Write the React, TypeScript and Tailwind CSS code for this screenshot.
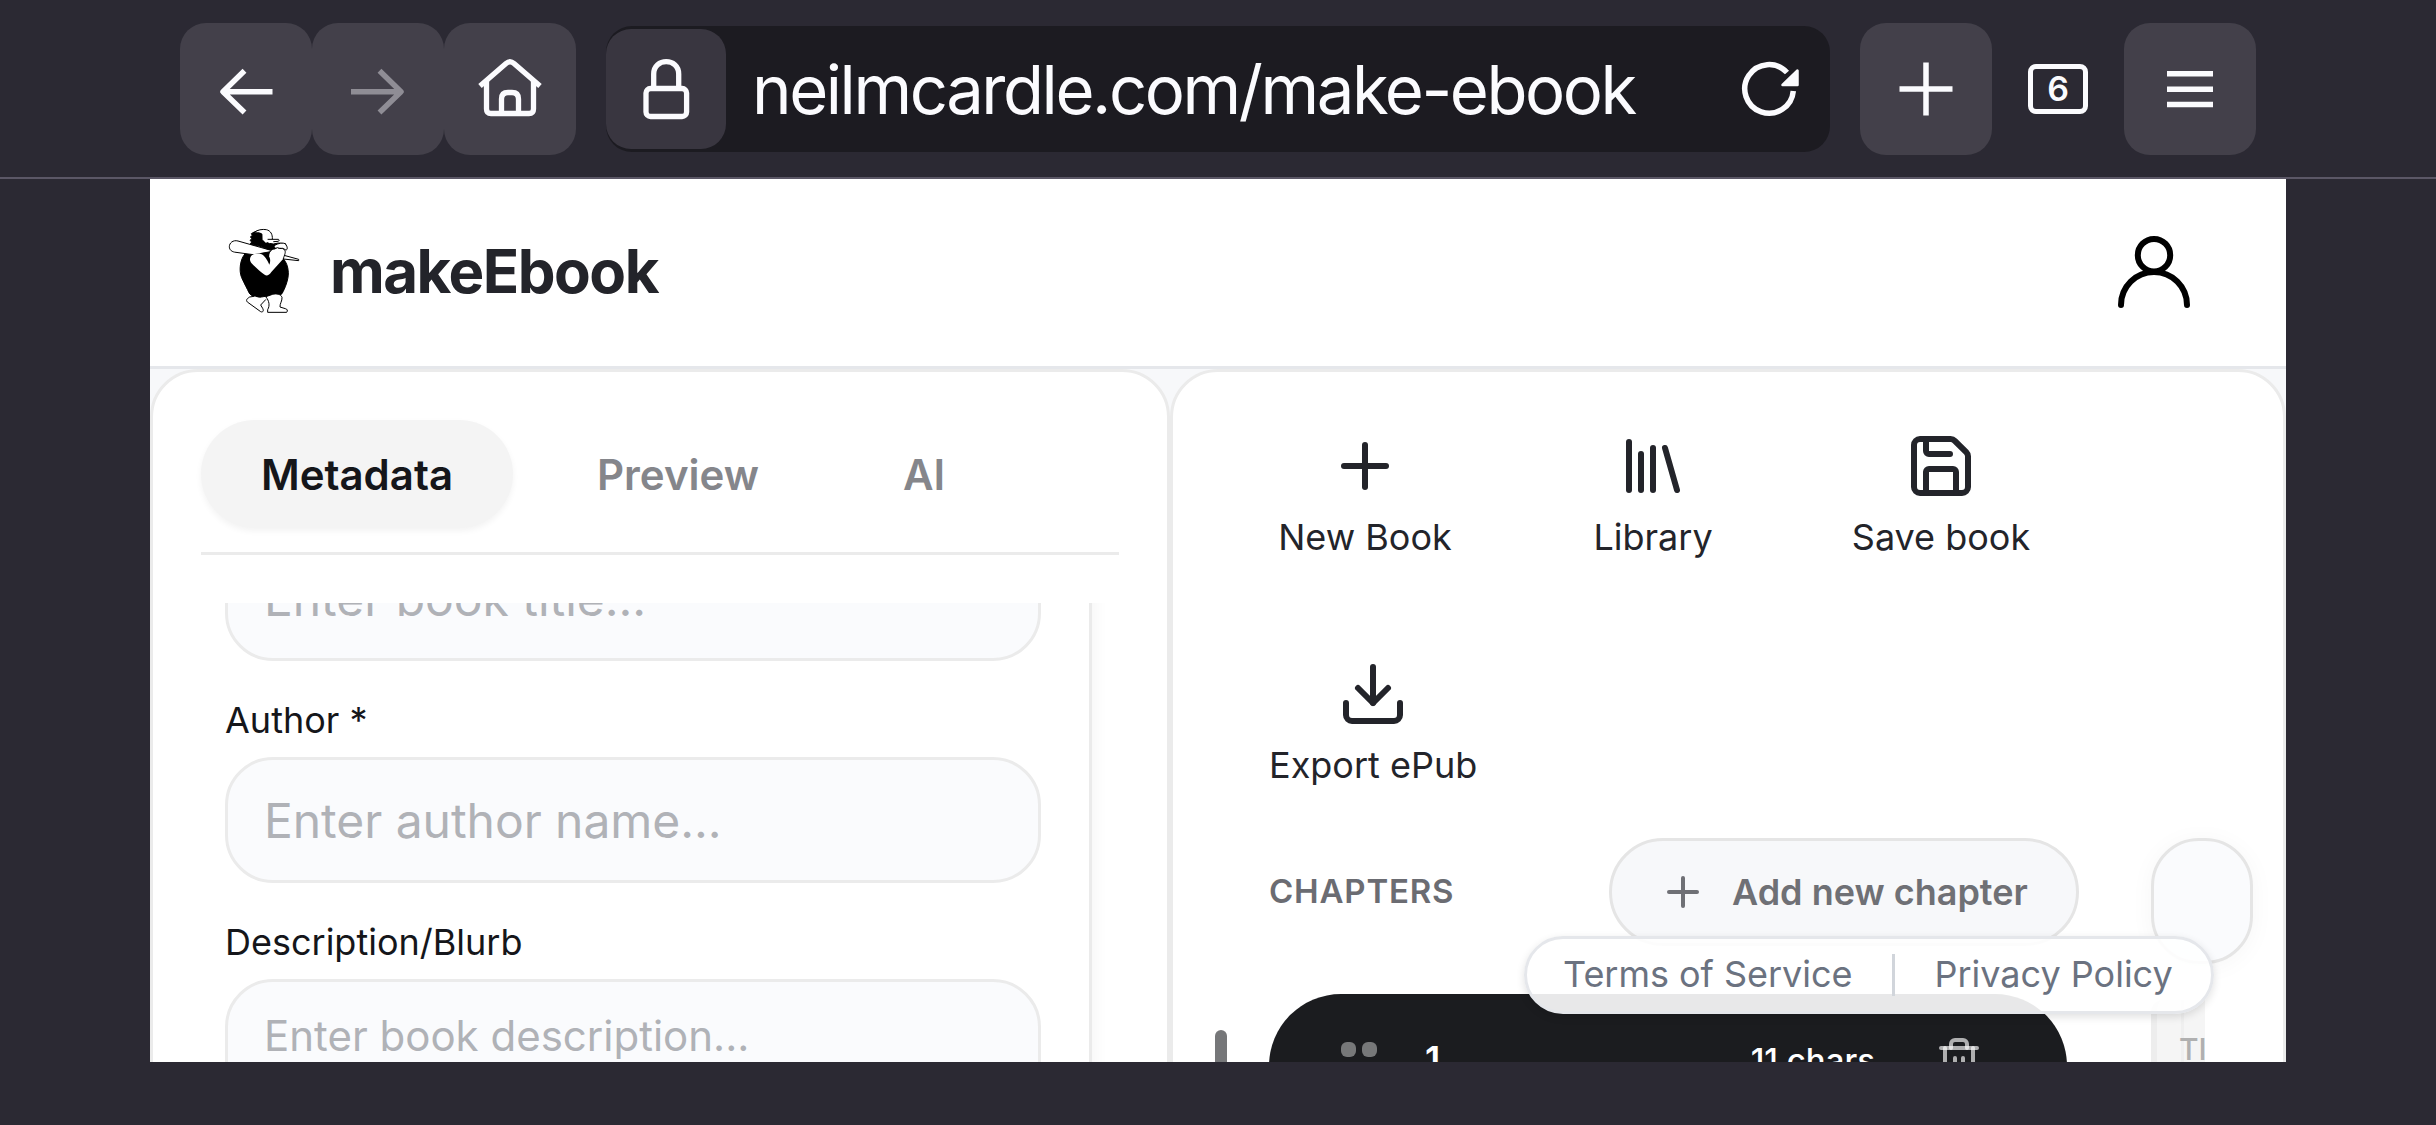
import React from "react";
import { Plus, Library, Save, Download, Trash2 } from "lucide-react";

function Mascot() {
  return (
    <svg viewBox="54 57 216 258" className="mb-[3px] h-[86px] w-[72px] shrink-0" fill="none" stroke="#000" strokeWidth="3" strokeLinejoin="round" strokeLinecap="round">
      <path d="M106 133C90 150 86 185 95 206C104 226 112 240 117 251C124 263 140 267 154 264L196 257C206 256 213 258 216 254C224 240 236 212 235 190C234 172 229 160 220 149L178 130Z" fill="#000" />
      <path d="M132 262L119 264C109 270 108 274 112 279L152 308C159 311 162 305 158 298L152 288L167 272" fill="#fff" />
      <path d="M168 264C178 276 180 290 173 302V310H230C234 305 232 300 226 299L210 294C209 284 217 276 216 265C212 255 200 253 188 256Z" fill="#fff" />
      <path d="M222 139L266 151V155L220 150Z" fill="#fff" />
      <path d="M190 126L84 96C69 92 58 102 58 113C58 123 66 129 78 130L130 137Z" fill="#fff" />
      <path d="M131 70L124 74L127 79L121 84L126 89L120 94L125 99L121 105L132 108L150 112L172 120L192 125L222 126L230 118L226 104L205 102L190 105L178 103L162 98V92L157 96L156 70L146 66Z" fill="#000" />
      <path d="M135 71C142 62 160 60 170 62C182 65 188 76 187 90H208L206 96L190 98L186 102L183 97L178 103L174 97L168 102L163 97L158 92V76C152 70 142 69 135 71Z" fill="#fff" stroke="none" />
      <path d="M133 70C141 62 158 60 169 62C182 65 188 76 187 91H205C209 93 208 96 204 97L191 98M187 91H174" />
      <path d="M196 108C206 102 220 101 226 104L231 113C233 120 230 125 226 122L218 118H196L192 112Z" fill="#fff" />
      <path d="M122 143C127 134 142 132 153 135C164 139 171 152 178 167C182 158 181 148 177 142C176 130 184 120 194 120L202 116C210 121 218 116 222 121C230 128 223 138 220 149L184 189C178 198 170 202 164 197C150 187 134 173 124 162C119 155 119 149 122 143Z" fill="#fff" stroke="none" />
      <path d="M176 140C176 130 184 120 194 120L202 116C210 121 218 116 222 121C230 128 223 138 220 149" />
    </svg>
  );
}

function ChromeButton({ children, className = "" }: { children: React.ReactNode; className?: string }) {
  return <button className={"flex size-[132px] shrink-0 items-center justify-center rounded-[26px] bg-[#43404a] " + className}>{children}</button>;
}

function BrowserBar() {
  return (
    <div className="flex h-[179px] items-start border-b-2 border-[#5b5766] bg-[#2b2933] pt-[23px] pl-[180px] text-[#fbfbfe]">
      <div className="flex">
        <ChromeButton>
          <svg viewBox="0 0 132 132" className="size-full" fill="none" stroke="currentColor" strokeWidth="5.5">
            <path d="M92.500 68.700H43M64.500 47.800L43 68.700L64.500 89.500" strokeLinejoin="round" />
          </svg>
        </ChromeButton>
        <ChromeButton>
          <svg viewBox="0 0 132 132" className="size-full" fill="none" stroke="#8f8d95" strokeWidth="5.5">
            <path d="M39 68.700H89M67.500 47.800L89 68.700L67.500 89.500" strokeLinejoin="round" />
          </svg>
        </ChromeButton>
        <ChromeButton>
          <svg viewBox="0 0 132 132" className="size-full" fill="none" stroke="currentColor" strokeWidth="5.300" strokeLinejoin="round">
            <path d="M36 63L62 40.500Q66 37 70 40.500L96 63" />
            <path d="M42.500 58V86Q42.500 90.500 47 90.500H85Q89.500 90.500 89.500 86V58" />
            <path d="M57.500 90V76Q57.500 69.500 64 69.500H68Q74.500 69.500 74.500 76V90" />
          </svg>
        </ChromeButton>
      </div>
      <div className="mt-[3px] ml-[30px] flex h-[126px] w-[1224px] items-center rounded-[26px] bg-[#1c1b21]">
        <div className="flex size-[120px] shrink-0 items-center justify-center rounded-[25px] bg-[#393640]">
          <svg viewBox="0 0 120 120" className="size-full" fill="none" stroke="currentColor" strokeWidth="5.300">
            <rect x="40" y="59.500" width="40.600" height="28" rx="4.500" />
            <path d="M47.700 59V45C47.700 28.500 72.700 28.500 72.700 45V59" />
          </svg>
        </div>
        <span className="ml-[26px] flex-1 pt-[2px] text-[67px] leading-[80px] tracking-[-2.43px] whitespace-nowrap">neilmcardle.com/make-ebook</span>
        <svg viewBox="0 0 60 60" className="mr-[31px] size-[60px] shrink-0" fill="none" stroke="currentColor" strokeWidth="5.500">
          <path d="M54.300 32A24.300 24.300 0 1 1 48 13.500" />
          <path d="M58.500 11.500V26H43.500Z" fill="currentColor" strokeWidth="2.500" strokeLinejoin="round" />
        </svg>
      </div>
      <ChromeButton className="ml-[30px]">
        <svg viewBox="0 0 132 132" className="size-full" stroke="currentColor" strokeWidth="5.500">
          <path d="M39.500 66H92.500M66 39.500V92.500" />
        </svg>
      </ChromeButton>
      <div className="mt-[41px] ml-9 flex h-[50px] w-[60px] items-center justify-center rounded-[8px] border-[5px] border-current">
        <span className="text-[34px] leading-[40px] font-semibold">6</span>
      </div>
      <ChromeButton className="ml-9">
        <svg viewBox="0 0 132 132" className="size-full" stroke="currentColor" strokeWidth="5.500">
          <path d="M43 50.700H89M43 66.300H89M43 81.500H89" />
        </svg>
      </ChromeButton>
    </div>
  );
}

function AppHeader() {
  return (
    <header className="flex h-[190px] items-center justify-between border-b-[3px] border-[#e5e7eb] bg-white pr-24 pl-[78px]">
      <div className="flex items-center">
        <Mascot />
        <span className="ml-[30px] pb-[3px] text-[60px] leading-[72px] font-bold tracking-[-1.5px] text-[#23242a]">makeEbook</span>
      </div>
      <svg viewBox="0 0 72 72" className="mb-[2px] size-[72px]" fill="none" stroke="#000" strokeWidth="6" strokeLinecap="round">
        <circle cx="36" cy="19.200" r="16.200" />
        <path d="M3 69A33 33 0 0 1 69 69" />
      </svg>
    </header>
  );
}

function Label({ children }: { children: React.ReactNode }) {
  return <div className="flex h-24 items-center pt-[22px] text-[36px] leading-[48px] text-[#15161a]">{children}</div>;
}

function Field({ text }: { text: string }) {
  return (
    <div className="flex h-[126px] items-center rounded-[48px] border-[3px] border-[#ebebeb] bg-[#fafbfd] pt-px pl-9 text-[48px] tracking-[-0.05px] text-[#b0b2b7]">{text}</div>
  );
}

function MetadataPanel() {
  return (
    <section className="h-[760px] w-[1020px] shrink-0 rounded-t-[48px] border-[3px] border-[#ebebeb] bg-white px-12 pt-12">
      <div className="flex border-b-[3px] border-[#ebebeb] pb-6 text-[42px] font-semibold text-[#85868b]">
        <div className="flex h-[108px] w-[312px] items-center justify-center rounded-full bg-[#f4f4f4] text-[#15161a] shadow-[0_3px_6px_rgba(0,0,0,0.05)]">Metadata</div>
        <div className="ml-6 flex h-[108px] w-[282px] items-center justify-center">Preview</div>
        <div className="ml-6 flex h-[108px] w-[162px] items-center justify-center">AI</div>
      </div>
      <div className="mt-12 h-[480px] overflow-hidden">
        <div className="-mt-[68px] h-[600px] w-[891px] border-r-[3px] border-[#ebebeb] pr-12 pl-6 shadow-[0_3px_18px_rgba(0,0,0,0.05)]">
          <Field text="Enter book title..." />
          <Label>Author *</Label>
          <Field text="Enter author name..." />
          <Label>Description/Blurb</Label>
          <div className="h-[240px] rounded-[48px] border-[3px] border-[#ebebeb] bg-[#fafbfd] pt-[22px] pl-9 text-[42px] leading-[63px] text-[#b0b2b7]">Enter book description...</div>
        </div>
      </div>
    </section>
  );
}

const tools = [
  { label: "New Book", Icon: Plus },
  { label: "Library", Icon: Library },
  { label: "Save book", Icon: Save },
  { label: "Export ePub", Icon: Download },
];

function BookPanel() {
  return (
    <section className="flex h-[760px] flex-1 rounded-t-[48px] border-[3px] border-[#ebebeb] bg-white pt-12">
      <div className="mt-[610px] ml-[42px] h-[100px] w-3 shrink-0 rounded-full bg-[#767779]" />
      <div className="ml-[42px] w-[798px] shrink-0">
        <div className="flex flex-wrap gap-x-24 gap-y-[87px] text-[#23242a]">
          {tools.map(({ label, Icon }) => (
            <div key={label} className="flex min-w-48 flex-col items-center pt-[10px]">
              <Icon className="size-[72px]" strokeWidth={2} />
              <span className="mt-[11px] text-[36px] leading-[48px] whitespace-nowrap">{label}</span>
            </div>
          ))}
        </div>
        <div className="mt-[49px] -mr-3 flex h-[108px] items-center justify-between">
          <span className="text-[33px] font-semibold tracking-[0.8px] text-[#6b6c72]">CHAPTERS</span>
          <div className="flex h-full w-[470px] items-center gap-[25px] rounded-full border-[3px] border-[#e5e5e5] bg-[#f7f8fa] pl-[47px] text-[#6f7075]">
            <Plus className="size-12" strokeWidth={2} />
            <span className="pb-px text-[36px] font-semibold whitespace-nowrap">Add new chapter</span>
          </div>
        </div>
        <div className="mt-12 flex h-[150px] items-start rounded-[72px] bg-[#1b1c1f] pl-[72px] text-white">
          <div className="mt-12 flex gap-[6px]">
            <span className="size-[15px] rounded-[6px] bg-[#777879]" />
            <span className="size-[15px] rounded-[6px] bg-[#777879]" />
          </div>
          <span className="mt-[41px] ml-12 text-[36px] leading-[48px] font-semibold">1</span>
          <span className="mt-[42px] ml-auto text-[33px] leading-[48px] font-medium">11 chars</span>
          <Trash2 className="mt-[42px] mr-[84px] ml-[60px] size-12" strokeWidth={2} stroke="rgba(255,255,255,0.65)" />
        </div>
      </div>
      <div className="mt-[418px] ml-[84px] w-[102px] shrink-0">
        <div className="h-[126px] rounded-[48px] border-[3px] border-[#e5e5e5] bg-[#fafbfd] shadow-[0_3px_24px_rgba(0,0,0,0.04)]" />
        <div className="mt-[36px] h-[120px] w-[54px] overflow-hidden rounded-tl-[12px] border-l-[6px] border-[#ededed] bg-[#f5f5f5]">
          <div className="ml-[24px] h-full border-l-[3px] border-[#efefef] pt-[22px] -indent-[5px] text-[30px] leading-[54px] font-medium text-[#b0b0b0]">TI</div>
        </div>
      </div>
    </section>
  );
}

export default function App() {
  return (
    <div className="h-[1125px] w-[2436px] overflow-hidden bg-[#2b2933] font-['Inter',sans-serif]">
      <BrowserBar />
      <main className="relative mx-auto h-[883px] w-[2136px] overflow-hidden bg-[#f7f8fa]">
        <AppHeader />
        <div className="flex">
          <MetadataPanel />
          <BookPanel />
        </div>
        <footer className="absolute top-[757px] left-[1374px] flex h-[78px] w-[690px] items-center rounded-full border-[3px] border-[#e5e7eb] bg-white/90 pl-9 text-[36px] text-[#6b7280] shadow-[0_3px_9px_rgba(0,0,0,0.12)]">
          <span className="pb-[2px] tracking-[-0.03px] whitespace-nowrap">Terms of Service</span>
          <span className="ml-10 h-[42px] w-[3px] bg-[#d1d5db]" />
          <span className="ml-[39px] pb-[2px] whitespace-nowrap">Privacy Policy</span>
        </footer>
      </main>
    </div>
  );
}
